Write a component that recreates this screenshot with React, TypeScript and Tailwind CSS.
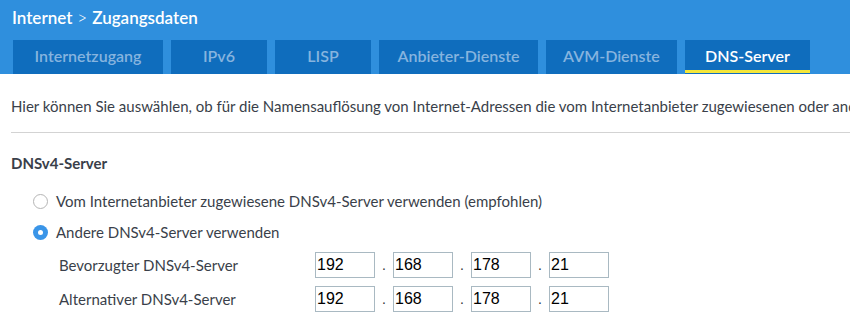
import React from "react";

const tabs = [
  { label: "Internetzugang", w: "w-[150px]" },
  { label: "IPv6", w: "w-[96px]" },
  { label: "LISP", w: "w-[96px]" },
  { label: "Anbieter-Dienste", w: "w-[159px]" },
  { label: "AVM-Dienste", w: "w-[131px]" },
  { label: "DNS-Server", w: "w-[125px]", active: true },
];

function IpRow({ label }: { label: string }) {
  const parts = ["192", "168", "178", "21"];
  return (
    <div className="flex items-center h-[26px]">
      <div className="w-[315px] pl-[59px] text-[15px] text-[#3a3f4a]">{label}</div>
      <div className="flex items-center">
        {parts.map((p, i) => (
          <React.Fragment key={i}>
            {i > 0 && <span className="w-[18px] text-center text-[14px] text-[#333] font-['Liberation_Sans',sans-serif]">.</span>}
            <input
              readOnly
              value={p}
              className="w-[60px] h-[26px] border border-[#a9b9c2] px-[1px] text-[16px] text-black font-['Liberation_Sans',Arial,sans-serif] outline-none"
            />
          </React.Fragment>
        ))}
      </div>
    </div>
  );
}

function Radio({ checked, label }: { checked?: boolean; label: string }) {
  return (
    <div className="flex items-center pl-[33px] gap-[8px] h-[20px]">
      {checked ? (
        <span className="w-[15px] h-[15px] rounded-full bg-[#3a95e8] flex items-center justify-center">
          <span className="w-[5px] h-[5px] rounded-full bg-white" />
        </span>
      ) : (
        <span className="w-[15px] h-[15px] rounded-full border border-[#b5b5b5] bg-white" />
      )}
      <span className="text-[15px] text-[#3a3f4a]">{label}</span>
    </div>
  );
}

export default function App() {
  return (
    <div className="w-[850px] h-[334px] overflow-hidden bg-white font-['Lato','Noto_Sans',sans-serif]">
      {/* Header */}
      <div className="bg-[#2f8fdd] h-[74px] px-[12px] flex flex-col">
        <div className="h-[40px] flex items-center pb-[4px] text-white text-[17px] font-semibold whitespace-nowrap">
          Internet <span className="mx-[5px] font-light">&gt;</span> Zugangsdaten
        </div>
        <div className="flex gap-[8px] pl-[1px]">
          {tabs.map((t) => (
            <div
              key={t.label}
              className={`${t.w} h-[34px] bg-[#0f6dbd] flex items-center justify-center text-[16px] font-semibold relative ${
                t.active ? "text-white" : "text-[#86b4df]"
              }`}
            >
              <span className="pb-[2px]">{t.label}</span>
              {t.active && <span className="absolute left-0 right-0 bottom-[1px] h-[3px] bg-[#f4e63a]" />}
            </div>
          ))}
        </div>
      </div>

      {/* Body */}
      <div className="pl-[11px]">
        <p className="mt-[22px] h-[20px] leading-[20px] text-[15px] text-[#3a3f4a] whitespace-nowrap">
          Hier können Sie auswählen, ob für die Namensauflösung von Internet-Adressen die vom Internetanbieter zugewiesenen oder andere DNS-Server verwendet werden sollen.
        </p>
        <div className="mt-[16px] border-t border-[#d3d3d3]" />
        <h2 className="mt-[20px] h-[20px] leading-[20px] text-[15px] font-bold text-[#3a3f4a]">DNSv4-Server</h2>
      </div>
      <div className="mt-[18px] flex flex-col gap-[11px]">
        <Radio label="Vom Internetanbieter zugewiesene DNSv4-Server verwenden (empfohlen)" />
        <Radio checked label="Andere DNSv4-Server verwenden" />
      </div>
      <div className="mt-[10px] flex flex-col gap-[8px]">
        <IpRow label="Bevorzugter DNSv4-Server" />
        <IpRow label="Alternativer DNSv4-Server" />
      </div>
    </div>
  );
}
